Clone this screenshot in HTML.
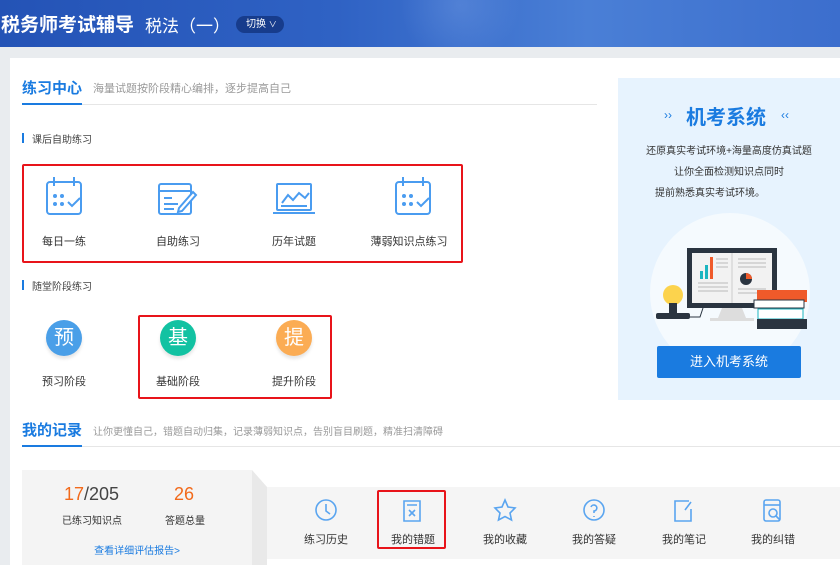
<!DOCTYPE html>
<html><head><meta charset="utf-8"><style>
*{margin:0;padding:0;box-sizing:border-box}
body{width:840px;height:565px;overflow:hidden;background:#e9ecef;font-family:"Liberation Sans","Noto Sans CJK SC",sans-serif;position:relative}
.a{position:absolute;white-space:nowrap}
.hdr{left:0;top:0;width:840px;height:47px;background:linear-gradient(90deg,#2453b6,#2f62c4 40%,#4a7fd6 70%,#3c6ecd)}
.card{left:10px;top:58px;width:830px;height:507px;background:#fff}
.blue{color:#1a7be0}
.lbl{font-size:11px;color:#333;transform:translateX(-50%)}
.red{border:2px solid #e8141a;border-radius:2px}
.circ{width:36px;height:36px;border-radius:50%;color:#fff;font-size:20px;text-align:center;line-height:36px;box-shadow:0 3px 3px #e6e6e6;transform:translateX(-50%)}
</style></head><body>
<div class="a hdr"></div>
<div class="a" style="left:400px;top:0;width:180px;height:47px;background:radial-gradient(circle at 60px 5px,rgba(120,160,230,.35),transparent 60px)"></div>
<div class="a" style="left:1px;top:10px;font-size:19px;font-weight:bold;color:#fff">税务师考试辅导</div>
<div class="a" style="left:145px;top:12px;font-size:17px;color:#fff">税法（一）</div>
<div class="a" style="left:236px;top:16px;width:48px;height:17px;border-radius:9px;background:#173c8c;color:#fff;font-size:10px;line-height:17px;padding-left:10px">切换 <span style="font-size:8px">∨</span></div>
<div class="a card"></div>

<div class="a blue" style="left:22px;top:77px;font-size:15px;font-weight:bold">练习中心</div>
<div class="a" style="left:93px;top:80px;font-size:11px;color:#999">海量试题按阶段精心编排，逐步提高自己</div>
<div class="a" style="left:22px;top:104px;width:575px;height:1px;background:#e6e6e6"></div>
<div class="a" style="left:22px;top:103px;width:60px;height:2px;background:#1a7be0"></div>

<div class="a" style="left:22px;top:133px;width:2px;height:10px;background:#1a7be0"></div>
<div class="a" style="left:32px;top:131px;font-size:10px;color:#444">课后自助练习</div>
<div class="a red" style="left:22px;top:164px;width:441px;height:99px"></div>

<svg class="a" style="left:40px;top:172px" width="420" height="48" fill="none" stroke="#4a9cf0" stroke-width="2">
 <g><rect x="7" y="10" width="34" height="32" rx="3"/><path d="M14 5v9M34 5v9M20 10h8"/><g fill="#4a9cf0" stroke="none"><circle cx="15" cy="24" r="2"/><circle cx="22" cy="24" r="2"/><circle cx="15" cy="32" r="2"/><circle cx="22" cy="32" r="2"/></g><path d="M28 30l4 4 8-8"/></g>
 <g transform="translate(117,0)"><rect x="2" y="12" width="32" height="30" rx="2"/><path d="M2 19h32M7 26h8M7 32h14M7 37h10"/><path d="M22 36l14-16 3 3-14 16-4 1z" fill="#fff"/></g>
 <g transform="translate(233,0)"><rect x="4" y="12" width="34" height="26" rx="1"/><path d="M0 41h42M8 34h26M9 31l6-8 5 5 6-7 6 5 4-5"/></g>
 <g transform="translate(349,0)"><rect x="7" y="10" width="34" height="32" rx="3"/><path d="M14 5v9M34 5v9M20 10h8"/><g fill="#4a9cf0" stroke="none"><circle cx="15" cy="24" r="2"/><circle cx="22" cy="24" r="2"/><circle cx="15" cy="32" r="2"/><circle cx="22" cy="32" r="2"/></g><path d="M28 30l4 4 8-8"/></g>
</svg>
<div class="a lbl" style="left:64px;top:233px">每日一练</div>
<div class="a lbl" style="left:178px;top:233px">自助练习</div>
<div class="a lbl" style="left:294px;top:233px">历年试题</div>
<div class="a lbl" style="left:409px;top:233px">薄弱知识点练习</div>

<div class="a" style="left:22px;top:280px;width:2px;height:10px;background:#1a7be0"></div>
<div class="a" style="left:32px;top:278px;font-size:10px;color:#444">随堂阶段练习</div>
<div class="a red" style="left:138px;top:315px;width:194px;height:84px"></div>
<div class="a circ" style="left:64px;top:320px;background:#4a9fe8">预</div>
<div class="a circ" style="left:178px;top:320px;background:#12c2a2">基</div>
<div class="a circ" style="left:294px;top:320px;background:#fbac54">提</div>
<div class="a lbl" style="left:64px;top:373px">预习阶段</div>
<div class="a lbl" style="left:178px;top:373px">基础阶段</div>
<div class="a lbl" style="left:294px;top:373px">提升阶段</div>

<div class="a" style="left:618px;top:78px;width:222px;height:322px;background:#e7f3fe"></div>
<div class="a" style="left:650px;top:213px;width:160px;height:160px;border-radius:50%;background:#f5fafe"></div>
<div class="a blue" style="left:664px;top:108px;font-size:12px">››</div>
<div class="a blue" style="left:686px;top:101px;font-size:20px;font-weight:bold">机考系统</div>
<div class="a blue" style="left:781px;top:108px;font-size:12px">‹‹</div>
<div class="a" style="left:729px;top:142px;font-size:10px;color:#333;transform:translateX(-50%)">还原真实考试环境+海量高度仿真试题</div>
<div class="a" style="left:729px;top:163px;font-size:10px;color:#333;transform:translateX(-50%)">让你全面检测知识点同时</div>
<div class="a" style="left:710px;top:184px;font-size:10px;color:#333;transform:translateX(-50%)">提前熟悉真实考试环境。</div>
<svg class="a" style="left:650px;top:245px" width="160" height="85">
 <rect x="37" y="3" width="90" height="60" fill="#2a3440"/>
 <rect x="42" y="8" width="80" height="50" fill="#f2f2f2"/>
 <path d="M82 8v50" stroke="#ccc"/>
 <rect x="50" y="26" width="3" height="8" fill="#1cb5c0"/><rect x="55" y="20" width="3" height="14" fill="#1cb5c0"/><rect x="60" y="12" width="3" height="22" fill="#ef5a2a"/>
 <path d="M66 14h12M66 18h12M66 22h12M48 38h30M48 42h30M48 46h30M88 14h28M88 18h28M88 22h28M88 44h28M88 48h28" stroke="#bbb"/>
 <circle cx="96" cy="34" r="6" fill="#2a3440"/><path d="M96 34v-6a6 6 0 0 1 6 6z" fill="#ef5a2a"/>
 <path d="M72 63h20l4 10h-28z" fill="#ddd"/><rect x="60" y="73" width="44" height="3" fill="#ddd"/>
 <circle cx="23" cy="50" r="10" fill="#fcd34d"/><rect x="19" y="58" width="8" height="10" fill="#2a3440"/><rect x="6" y="68" width="34" height="6" rx="2" fill="#2a3440"/>
 <path d="M40 72h10l3-9" stroke="#2a3440" fill="none"/>
 <rect x="107" y="45" width="50" height="12" fill="#ef5a2a"/><rect x="104" y="55" width="50" height="8" fill="#fff" stroke="#2a3440"/>
 <rect x="108" y="64" width="45" height="10" fill="#fff" stroke="#1cb5c0"/><rect x="107" y="74" width="50" height="10" fill="#2a3440"/>
</svg>
<div class="a" style="left:657px;top:346px;width:144px;height:32px;background:#1a7be0;border-radius:2px;color:#fff;font-size:13px;text-align:center;line-height:32px">进入机考系统</div>

<div class="a blue" style="left:22px;top:419px;font-size:15px;font-weight:bold">我的记录</div>
<div class="a" style="left:93px;top:423px;font-size:10px;color:#999">让你更懂自己，错题自动归集，记录薄弱知识点，告别盲目刷题，精准扫清障碍</div>
<div class="a" style="left:22px;top:446px;width:818px;height:1px;background:#e6e6e6"></div>
<div class="a" style="left:22px;top:445px;width:60px;height:2px;background:#1a7be0"></div>

<div class="a" style="left:267px;top:487px;width:573px;height:72px;background:#f5f5f5"></div>
<div class="a" style="left:22px;top:470px;width:230px;height:95px;background:#f4f4f4"></div>
<svg class="a" style="left:252px;top:470px" width="16" height="95"><path d="M0 0L15 17V95H0z" fill="#e9e9e9"/></svg>
<div class="a" style="left:64px;top:484px;font-size:18px;color:#444"><span style="color:#f26a1b">17</span>/205</div>
<div class="a" style="left:174px;top:484px;font-size:18px;color:#f26a1b">26</div>
<div class="a lbl" style="left:92px;top:512px;font-size:10px">已练习知识点</div>
<div class="a lbl" style="left:185px;top:512px;font-size:10px">答题总量</div>
<div class="a blue" style="left:137px;top:542px;font-size:10px;transform:translateX(-50%)">查看详细评估报告&gt;</div>

<div class="a red" style="left:377px;top:490px;width:69px;height:59px"></div>
<svg class="a" style="left:310px;top:497px" width="480" height="28" fill="none" stroke="#5aa5f0" stroke-width="1.6">
 <circle cx="16" cy="13" r="10"/><path d="M16 7v7l4 3"/>
 <g transform="translate(86,0)"><path d="M8 4h16v20H8z"/><path d="M11 8h10M13 13l6 6M19 13l-6 6"/></g>
 <path d="M195 3l3 7 7 1-5 5 1.5 7-6.5-3.5-6.5 3.5 1.5-7-5-5 7-1z"/>
 <g transform="translate(268,0)"><circle cx="16" cy="13" r="10"/><path d="M13 10a3 3 0 1 1 3 4v2M16 19v1"/></g>
 <g transform="translate(357,0)"><path d="M22 4h-14v20h16v-12M24 5l-6 8"/></g>
 <g transform="translate(446,0)"><rect x="8" y="3" width="16" height="21" rx="2"/><path d="M8 8h16"/><circle cx="17" cy="16" r="4"/><path d="M20 19l4 4"/></g>
</svg>
<div class="a lbl" style="left:326px;top:531px">练习历史</div>
<div class="a lbl" style="left:413px;top:531px">我的错题</div>
<div class="a lbl" style="left:505px;top:531px">我的收藏</div>
<div class="a lbl" style="left:594px;top:531px">我的答疑</div>
<div class="a lbl" style="left:684px;top:531px">我的笔记</div>
<div class="a lbl" style="left:773px;top:531px">我的纠错</div>
</body></html>
